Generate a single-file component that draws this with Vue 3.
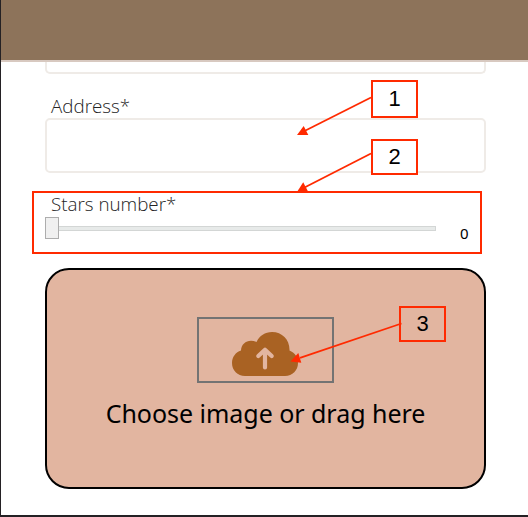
<script setup>
import { ref } from 'vue'

const stars = ref(0)
const markers = [
  { n: 1, cls: 'marker-address' },
  { n: 2, cls: 'marker-stars' },
  { n: 3, cls: 'marker-image' },
]
const arrows = [
  { line: 'M371 97.5L305 130.8', head: '297,135 303.7,126 308.3,135' },
  { line: 'M371 153.5L305 187.3', head: '297,192 303.2,182.3 308.2,191.8' },
  { line: 'M401.5 323.5L300 357.8', head: '290.5,361.5 298.3,353 301.3,362.8' },
]
</script>

<template>
  <div class="page">
    <header class="topbar"></header>
    <main class="form">
      <div class="input previous"></div>
      <label class="label address-label">Address*</label>
      <div class="input address"></div>
      <section class="stars">
        <label class="label stars-label">Stars number*</label>
        <div class="slider-row">
          <div class="slider">
            <div class="thumb"></div>
            <div class="track"></div>
          </div>
          <span class="value">{{ stars }}</span>
        </div>
      </section>
      <section class="dropzone">
        <div class="upload">
          <svg class="cloud" width="68" height="46" viewBox="0 0 68 46">
            <path fill="#a96223" d="M14 45C6.500 45 1 39.400 1 32C1 26 4.700 21.200 10 19.500C10.200 13.500 14.600 9.700 20 9.700C22 9.700 23.800 10.200 25.500 11.100C28.500 4.700 34 1 41 1C51 1 58.500 8.500 58.500 18.500V19.500C63.700 21.600 67 26.200 67 32C67 39.400 61.500 45 54 45Z" />
            <path fill="none" stroke="#e2b5a0" stroke-width="4.200" stroke-linecap="round" stroke-linejoin="round" d="M34 36.500V19.500M27.300 25L34 18.700L40.700 25" />
          </svg>
        </div>
        <p class="prompt">Choose image or drag here</p>
      </section>
    </main>
    <footer class="bottom-edge"></footer>

    <svg class="arrows" width="528" height="517" viewBox="0 0 528 517">
      <g v-for="arrow in arrows" :key="arrow.line">
        <path :d="arrow.line" stroke="#ff2a00" stroke-width="1.800" fill="none" />
        <polygon :points="arrow.head" fill="#ff2a00" />
      </g>
    </svg>
    <div v-for="m in markers" :key="m.n" class="marker" :class="m.cls">{{ m.n }}</div>
  </div>
</template>

<style>
body {
  margin: 0;
  overflow: hidden;
}
</style>

<style scoped>
.page {
  position: relative;
  box-sizing: border-box;
  width: 528px;
  height: 517px;
  display: flex;
  flex-direction: column;
  border-left: 1px solid #242124;
  background: #fff;
  overflow: hidden;
}
.topbar {
  box-sizing: border-box;
  flex: none;
  height: 62px;
  background: #8d735a;
  border-bottom: 2px solid #d8c9c0;
}
.form {
  flex: 1;
  min-height: 0;
  display: flex;
  flex-direction: column;
  padding: 0 42px 0 44px;
}
.input {
  box-sizing: border-box;
  flex: none;
  border: 2px solid #efebe7;
  border-radius: 5px;
}
.previous {
  height: 12px;
  border-top: 0;
  border-radius: 0 0 5px 5px;
}
.label {
  display: block;
  flex: none;
  font-family: "Open Sans", "Noto Sans", sans-serif;
  font-weight: 300;
  font-size: 18.8px;
  line-height: 24px;
  color: #242424;
  white-space: nowrap;
}
.address-label {
  margin: 20px 0 0 6px;
  height: 24px;
}
.address {
  height: 55px;
}
.stars {
  box-sizing: border-box;
  flex: none;
  width: 450px;
  height: 63px;
  margin: 18px 0 0 -13px;
  border: 2px solid #ff2a00;
  padding: 0 11px;
}
.stars-label {
  padding-left: 6px;
  height: 24px;
  line-height: 22px;
}
.slider-row {
  display: flex;
  align-items: flex-start;
}
.slider {
  display: flex;
  flex: none;
  align-items: center;
  width: 391px;
  height: 22px;
}
.thumb {
  box-sizing: border-box;
  flex: none;
  width: 14px;
  height: 22px;
  border: 1px solid #adadad;
  background: #f0f0f0;
}
.track {
  box-sizing: border-box;
  flex: 1;
  height: 5px;
  margin-top: 1px;
  border: 1px solid #d3d6d5;
  border-left: 0;
  background: #e7eae9;
}
.value {
  flex: none;
  margin: 6px 0 0 24px;
  font: 15px/20px "Noto Sans", "Open Sans", sans-serif;
  color: #000;
}
.dropzone {
  box-sizing: border-box;
  flex: none;
  height: 221px;
  margin-top: 14px;
  padding-top: 47px;
  border: 2px solid #000;
  border-radius: 24px;
  background: #e2b5a0;
  display: flex;
  flex-direction: column;
  align-items: center;
}
.upload {
  box-sizing: border-box;
  width: 137px;
  height: 66px;
  border: 2px solid #737373;
  padding: 12px 2px 0 0;
  display: flex;
  justify-content: center;
  align-items: flex-start;
}
.prompt {
  margin: 12px 0 0;
  font: 25px/36px "Noto Sans", "Open Sans", sans-serif;
  letter-spacing: -0.03px;
  color: #000;
  white-space: nowrap;
}
.bottom-edge {
  flex: none;
  height: 2px;
  margin-left: -1px;
  background: #242124;
}
.arrows {
  position: absolute;
  left: -1px;
  top: 0;
}
.marker {
  position: absolute;
  box-sizing: border-box;
  width: 47px;
  height: 36px;
  border: 2px solid #ff2a00;
  display: flex;
  align-items: center;
  justify-content: center;
  font: 22px/32px "Liberation Sans", Arial, sans-serif;
  color: #000;
}
.marker-address {
  left: 370px;
  top: 80px;
  height: 38px;
}
.marker-stars {
  left: 370px;
  top: 139px;
  background: #fff;
}
.marker-image {
  left: 398px;
  top: 306px;
}
</style>
